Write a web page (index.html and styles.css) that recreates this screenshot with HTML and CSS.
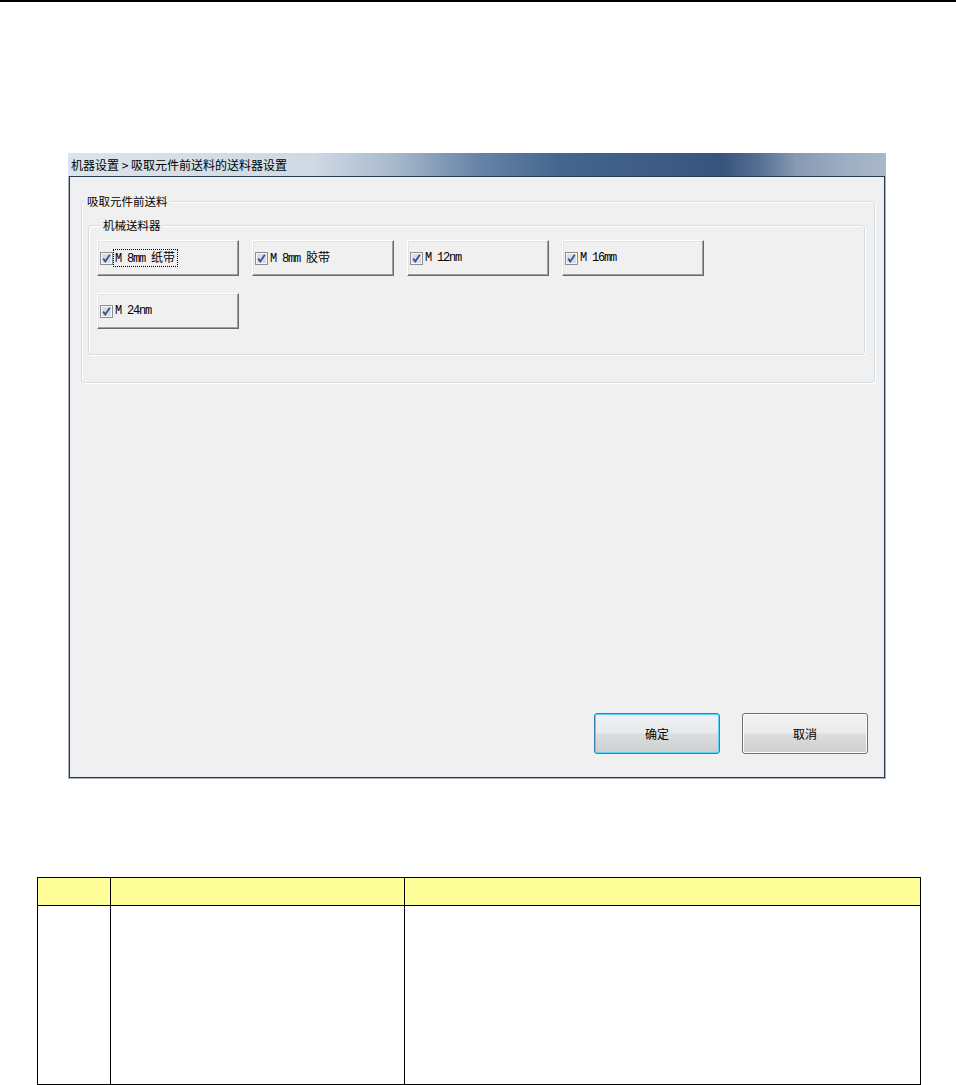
FILE: index.html
```html
<!DOCTYPE html>
<html lang="zh-CN">
<head>
<meta charset="utf-8">
<title>吸取元件前送料的送料器设置</title>
<link rel="stylesheet" href="styles.css">
</head>
<body>
<div class="topline"></div>
<div class="window">
  <div class="titlebar">机器设置 &gt; 吸取元件前送料的送料器设置</div>
  <div class="client">
    <fieldset class="group outer">
      <legend>吸取元件前送料</legend>
      <fieldset class="group inner">
        <legend>机械送料器</legend>
        <div class="feeders">
          <button class="feeder"><svg class="chk" width="13" height="13" viewBox="0 0 13 13"><rect x="0.5" y="0.5" width="12" height="12" fill="#f6f6f6" stroke="#8e8f8f"/><rect x="2" y="2" width="9" height="9" fill="#d9dde3"/><path d="M3.2 6.6 L5.3 9.4 L9.8 2.8" fill="none" stroke="#3b4f93" stroke-width="1.8"/></svg><span class="lbl focus">M 8mm <span class="cjk">纸带</span></span></button>
          <button class="feeder"><svg class="chk" width="13" height="13" viewBox="0 0 13 13"><rect x="0.5" y="0.5" width="12" height="12" fill="#f6f6f6" stroke="#8e8f8f"/><rect x="2" y="2" width="9" height="9" fill="#d9dde3"/><path d="M3.2 6.6 L5.3 9.4 L9.8 2.8" fill="none" stroke="#3b4f93" stroke-width="1.8"/></svg><span class="lbl">M 8mm <span class="cjk">胶带</span></span></button>
          <button class="feeder"><svg class="chk" width="13" height="13" viewBox="0 0 13 13"><rect x="0.5" y="0.5" width="12" height="12" fill="#f6f6f6" stroke="#8e8f8f"/><rect x="2" y="2" width="9" height="9" fill="#d9dde3"/><path d="M3.2 6.6 L5.3 9.4 L9.8 2.8" fill="none" stroke="#3b4f93" stroke-width="1.8"/></svg><span class="lbl">M 12nm</span></button>
          <button class="feeder"><svg class="chk" width="13" height="13" viewBox="0 0 13 13"><rect x="0.5" y="0.5" width="12" height="12" fill="#f6f6f6" stroke="#8e8f8f"/><rect x="2" y="2" width="9" height="9" fill="#d9dde3"/><path d="M3.2 6.6 L5.3 9.4 L9.8 2.8" fill="none" stroke="#3b4f93" stroke-width="1.8"/></svg><span class="lbl">M 16mm</span></button>
          <button class="feeder"><svg class="chk" width="13" height="13" viewBox="0 0 13 13"><rect x="0.5" y="0.5" width="12" height="12" fill="#f6f6f6" stroke="#8e8f8f"/><rect x="2" y="2" width="9" height="9" fill="#d9dde3"/><path d="M3.2 6.6 L5.3 9.4 L9.8 2.8" fill="none" stroke="#3b4f93" stroke-width="1.8"/></svg><span class="lbl">M 24nm</span></button>
        </div>
      </fieldset>
    </fieldset>
    <div class="actions">
      <button class="btn default">确定</button>
      <button class="btn">取消</button>
    </div>
  </div>
</div>
<table class="spec">
  <colgroup><col class="c1"><col class="c2"><col class="c3"></colgroup>
  <thead><tr><th></th><th></th><th></th></tr></thead>
  <tbody><tr><td></td><td></td><td></td></tr></tbody>
</table>
</body>
</html>
```
FILE: styles.css
```css
html, body {
  margin: 0;
  padding: 0;
  background: #ffffff;
  font-family: "Noto Sans CJK SC", "Liberation Sans", sans-serif;
}

.topline {
  height: 2px;
  background: #000000;
}

.window {
  margin: 151px 0 0 68px;
  width: 818px;
  box-sizing: border-box;
  padding: 0 1px 1px 1px;
  background: #a8b4c4;
}

.titlebar {
  margin: 0 -1px;
  height: 23px;
  box-sizing: border-box;
  padding: 0 0 0 3px;
  font-size: 12px;
  line-height: 23px;
  color: #000000;
  background: linear-gradient(to right,
    #dce3eb 0%,
    #cfd9e4 30%,
    #a7b8cc 40%,
    #6784a8 50%,
    #46668e 60%,
    #37547c 80%,
    #5a7497 85%,
    #8799b3 89%,
    #9dadc2 95%,
    #a9b7c8 100%);
}

.client {
  height: 602px;
  box-sizing: border-box;
  border: 1px solid #2b3a50;
  background: #f0f0f0;
  display: flex;
  flex-direction: column;
}

.group {
  box-sizing: border-box;
  min-width: 0;
  padding: 0;
  border: 1px solid #d3dde5;
  border-radius: 3px;
  box-shadow: inset 1px 1px 0 #ffffff, 1px 1px 0 #ffffff;
}

.group legend {
  padding: 0 2px;
  font-size: 11.5px;
  line-height: 14px;
  color: #000000;
  background: #f0f0f0;
}

.group.outer {
  margin: 17px 0 0 11px;
  width: 794px;
  height: 189px;
}

.group.outer > legend {
  margin-left: 3px;
}

.group.inner {
  margin: 10px 0 0 6px;
  width: 777px;
  height: 137px;
  padding: 8px 0 0 8px;
}

.group.inner > legend {
  margin-left: 4px;
}

.feeders {
  display: grid;
  grid-template-columns: repeat(4, 142px);
  column-gap: 13px;
  row-gap: 17px;
}

.feeder {
  width: 142px;
  height: 36px;
  box-sizing: border-box;
  margin: 0;
  padding: 0 0 0 2px;
  display: flex;
  align-items: center;
  gap: 1px;
  background: #f0f0f0;
  border: 1px solid;
  border-color: #ffffff #696969 #696969 #ffffff;
  box-shadow: inset -1px -1px 0 #a0a0a0, inset 1px 1px 0 #e3e3e3;
  font-family: "Liberation Mono", "Noto Sans CJK SC", monospace;
  font-size: 12px;
  letter-spacing: -1.2px;
  color: #000000;
  text-align: left;
}

.chk {
  flex: none;
  display: block;
}

.lbl {
  line-height: 13px;
  padding: 0 2px 0 1px;
  white-space: pre;
}

.lbl.focus {
  outline: 1px dotted #000000;
  outline-offset: 0;
}

.cjk {
  font-family: "Noto Sans CJK SC", sans-serif;
  font-size: 12px;
  letter-spacing: 0;
}

.actions {
  margin-top: auto;
  display: flex;
  justify-content: flex-end;
  gap: 22px;
  padding: 0 16px 23px 0;
}

.btn {
  width: 126px;
  height: 41px;
  box-sizing: border-box;
  margin: 0;
  padding: 0;
  border: 1px solid #707070;
  border-radius: 3px;
  background: linear-gradient(to bottom, #f2f2f2 0%, #ebebeb 48%, #dddddd 52%, #cfcfcf 100%);
  box-shadow: inset 0 0 0 1px #fcfcfc;
  font-family: "Noto Sans CJK SC", sans-serif;
  font-size: 12px;
  color: #000000;
}

.btn.default {
  border-color: #3c7fb1;
  box-shadow: inset 0 0 0 1px #5fd0f6;
  background: linear-gradient(to bottom, #f0f1f2 0%, #e8eaeb 48%, #dadcdd 52%, #cdd0d2 100%);
}

.spec {
  margin: 98px 0 0 37px;
  border-collapse: collapse;
  table-layout: fixed;
  width: 883px;
}

.spec .c1 { width: 73px; }
.spec .c2 { width: 294px; }
.spec .c3 { width: 516px; }

.spec th,
.spec td {
  border: 1px solid #000000;
  padding: 0;
}

.spec th {
  height: 27px;
  background: #ffff99;
}

.spec td {
  height: 178px;
  background: #ffffff;
}
```
